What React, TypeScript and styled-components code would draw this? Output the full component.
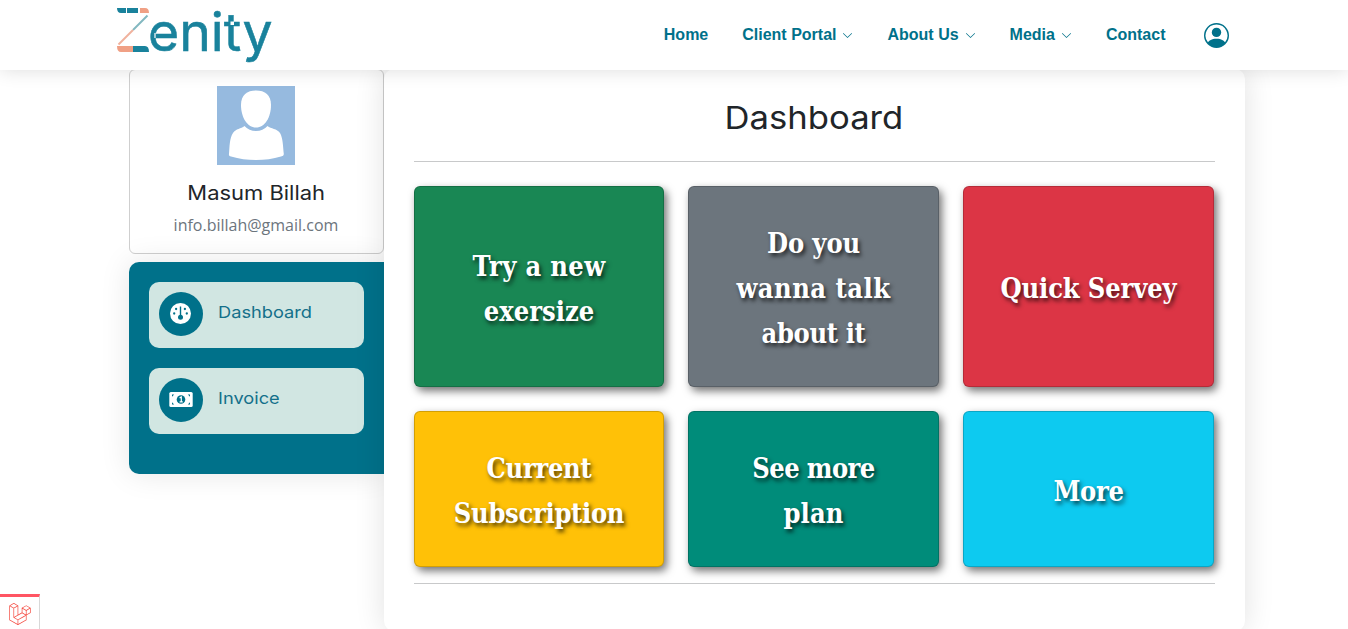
import React from 'react';
import styled, { createGlobalStyle } from 'styled-components';
import { BsChevronDown, BsPersonCircle } from 'react-icons/bs';
import { FaLaravel } from 'react-icons/fa6';

const teal = '#00718a';

const GlobalStyle = createGlobalStyle`
  *, *::before, *::after { box-sizing: border-box; }
  html, body { margin: 0; height: 100%; overflow: hidden; background: #fff; }
  body { font-family: "Open Sans", sans-serif; color: #212529; }
`;

const Page = styled.div`
  height: 629px;
  overflow: hidden;
  display: flex;
  flex-direction: column;
`;

const Header = styled.header`
  position: relative;
  z-index: 10;
  flex: none;
  height: 70px;
  padding: 0 119px 0 116px;
  display: flex;
  justify-content: space-between;
  align-items: flex-start;
  background: #fff;
  box-shadow: 0 0 18px rgba(0, 0, 0, 0.14);
`;

const LogoSvg = styled.svg`
  display: block;
`;

const Nav = styled.nav`
  height: 70px;
  display: flex;
  align-items: center;
`;

const NavLink = styled.a<{ $gap: number }>`
  display: flex;
  align-items: center;
  gap: 6px;
  margin-right: ${(p) => p.$gap}px;
  color: ${teal};
  font: 700 16px/20px "Liberation Sans", Arial, sans-serif;
  white-space: nowrap;
  svg { width: 11px; height: 11px; }
`;

const AccountIcon = styled(BsPersonCircle)`
  width: 25px;
  height: 25px;
  color: ${teal};
`;

const Content = styled.main`
  flex: none;
  width: 1116px;
  margin: -1px 0 0 129px;
  display: flex;
  align-items: flex-start;
`;

const Sidebar = styled.aside`
  width: 255px;
  flex: none;
  display: flex;
  flex-direction: column;
  gap: 8px;
`;

const ProfileCard = styled.section`
  height: 185px;
  padding: 16px 1px 0 0;
  border: 1px solid #cfcfcf;
  border-radius: 6px;
  background: #fff;
  display: flex;
  flex-direction: column;
  align-items: center;
`;

const AvatarSvg = styled.svg`
  display: block;
  flex: none;
`;

const Name = styled.h2`
  margin: 16px 0 0;
  font: 400 19.5px/24px Inter, sans-serif;
  transform: scaleX(1.125);
  color: #212529;
`;

const Email = styled.p`
  margin: 8px 0 0;
  font-size: 16px;
  line-height: 24px;
  color: #6c757d;
`;

const Menu = styled.nav`
  height: 212px;
  padding: 20px;
  border-radius: 10px 0 0 10px;
  background: ${teal};
  box-shadow: 0 0 30px rgba(0, 0, 0, 0.1);
  display: flex;
  flex-direction: column;
  gap: 20px;
`;

const MenuItem = styled.a`
  height: 66px;
  padding: 10px;
  border-radius: 10px;
  background: #d1e6e2;
  display: flex;
  gap: 15px;
`;

const MenuIcon = styled.span`
  width: 44px;
  height: 44px;
  padding: 0 1px 1px 0;
  border-radius: 50%;
  background: ${teal};
  color: #fff;
  display: flex;
  align-items: center;
  justify-content: center;
`;

const MenuLabel = styled.span`
  font: 400 16.5px/40px Inter, sans-serif;
  transform: scaleX(1.105);
  transform-origin: left;
  color: #14708a;
`;

const Panel = styled.section`
  position: relative;
  flex: 1;
  height: 562px;
  padding: 30px 30px 0;
  border-radius: 10px;
  background: #fff;
  box-shadow: 0 0 30px rgba(0, 0, 0, 0.12);
`;

const Title = styled.h1`
  margin: 0;
  padding: 0 1px 24px 0;
  text-align: center;
  font: 400 31.5px/38px Inter, sans-serif;
  transform: scaleX(1.1);
  color: #212529;
`;

const Rule = styled.hr`
  margin: 0;
  border: 0;
  height: 1px;
  background: #c8c9ca;
`;

const Tiles = styled.div`
  display: grid;
  grid-template-columns: 250px 251px 251px;
  grid-template-rows: 201px 156px;
  gap: 24px;
  padding: 24px 0 16px;
`;

const Tile = styled.a<{ $color: string }>`
  padding-top: 4px;
  display: flex;
  flex-direction: column;
  align-items: center;
  justify-content: center;
  border: 1px solid rgba(0, 0, 0, 0.175);
  border-radius: 6px;
  background: ${(p) => p.$color};
  box-shadow: 3px 4px 8px rgba(0, 0, 0, 0.55);
`;

const TileLine = styled.span<{ $spacing: number }>`
  font: 700 27px/45px "DejaVu Serif Condensed", "DejaVu Serif", serif;
  font-stretch: condensed;
  letter-spacing: ${(p) => p.$spacing}px;
  color: #fff;
  text-shadow: 2px 3px 4px rgba(0, 0, 0, 0.7);
  white-space: nowrap;
`;

const DebugTab = styled.button`
  position: fixed;
  left: 0;
  bottom: 0;
  z-index: 20;
  width: 40px;
  height: 35px;
  padding: 1px 0 0;
  border: 0;
  border-top: 3px solid #ff5563;
  border-right: 1px solid #d8d8d8;
  background: #fff;
  color: #f4493f;
  font-size: 22px;
  display: flex;
  align-items: center;
  justify-content: center;
`;

const Logo = () => (
  <LogoSvg width="160" height="66" viewBox="0 0 160 66" role="img" aria-label="Zenity">
    <path d="M1 8h9v5H5q-4 0-4-5z" fill="#19829c" />
    <path d="M11 8h11v5H11z" fill="#19829c" />
    <path d="M24 8h5q4 0 4 5h-9z" fill="#f0a085" />
    <path d="M31.500 15.500L17 30" stroke="#82b8c0" strokeWidth="2" />
    <path d="M17 30L2.500 44.500" stroke="#f0b29d" strokeWidth="2" />
    <path d="M1 46h16v6H5q-4 0-4-6z" fill="#f0a085" />
    <path d="M17 46h12q4 0 4 6H17z" fill="#19829c" />
    <text x="32" y="51" textLength="124.500" lengthAdjust="spacingAndGlyphs" fontFamily="Inter, sans-serif" fontSize="53" fill="#19829c" stroke="#19829c" strokeWidth="0.500">enity</text>
    <path d="M39 33v5" stroke="#fff" strokeWidth="1.200" />
    <path d="M114.500 21.500h3.500v3.500h-3.500z" fill="#fff" />
  </LogoSvg>
);

const Avatar = () => (
  <AvatarSvg width="78" height="79" viewBox="0 0 78 79">
    <rect width="78" height="79" fill="#96badf" />
    <path d="M39 4.500C48 4.500 54 9 54 19C54 31 48 41.500 39 41.500C30 41.500 24 31 24 19C24 9 30 4.500 39 4.500z" fill="#fff" />
    <path d="M27.500 40Q32 45 39 45Q46 45 50.500 40C54 43 60 42.500 63 47C66 52 66 61 66.800 68Q67 70 64 70.500Q52 74 39 74Q26 74 14 70.500Q11.500 70 12 68C12.500 61 12.500 52 16 47C19 42.500 24 43 27.500 40z" fill="#fff" />
  </AvatarSvg>
);

const GaugeIcon = () => (
  <svg width="21" height="21" viewBox="0 0 21 21">
    <circle cx="10.500" cy="10.500" r="10.500" fill="currentColor" />
    <g fill={teal}>
      <path d="M9.800 3.500h1.400v9h-1.400z" />
      <circle cx="10.500" cy="14.300" r="2.500" />
      <circle cx="4.200" cy="10.500" r="1.150" />
      <circle cx="16.800" cy="10.500" r="1.150" />
      <circle cx="6.100" cy="6" r="1.150" />
      <circle cx="14.900" cy="6" r="1.150" />
    </g>
  </svg>
);

const MoneyIcon = () => (
  <svg width="24" height="15" viewBox="0 0 24 15">
    <rect x="0.300" width="23.400" height="15" rx="1.600" fill="currentColor" />
    <path d="M3 4.700V2.500h2.200zM21 4.700V2.500h-2.200zM3 10.300v2.200h2.200zM21 10.300v2.200h-2.200z" fill={teal} />
    <circle cx="12" cy="7.500" r="4.300" fill={teal} />
    <path d="M10.600 5.900L12.300 5v4.700M10.600 9.800h3.200" fill="none" stroke="currentColor" strokeWidth="1.200" />
  </svg>
);

const links = [
  { label: 'Home', gap: 34 },
  { label: 'Client Portal', menu: true, gap: 34 },
  { label: 'About Us', menu: true, gap: 34 },
  { label: 'Media', menu: true, gap: 34 },
  { label: 'Contact', gap: 38.5 },
];

const tiles = [
  { color: '#198754', lines: [['Try a new', 0.35], ['exersize', 0]] },
  { color: '#6c757d', lines: [['Do you', -0.1], ['wanna talk', 0.5], ['about it', -0.35]] },
  { color: '#dc3545', lines: [['Quick Servey', -0.15]] },
  { color: '#ffc107', lines: [['Current', -0.3], ['Subscription', -0.3]] },
  { color: '#008c7a', lines: [['See more', -0.6], ['plan', 0.1]] },
  { color: '#0dcaf0', lines: [['More', -0.3]] },
] as { color: string; lines: [string, number][] }[];

export default function App() {
  return (
    <Page>
      <GlobalStyle />
      <Header>
        <Logo />
        <Nav>
          {links.map((l) => (
            <NavLink key={l.label} $gap={l.gap}>
              {l.label}
              {l.menu && <BsChevronDown />}
            </NavLink>
          ))}
          <AccountIcon />
        </Nav>
      </Header>
      <Content>
        <Sidebar>
          <ProfileCard>
            <Avatar />
            <Name>Masum Billah</Name>
            <Email>info.billah@gmail.com</Email>
          </ProfileCard>
          <Menu>
            <MenuItem>
              <MenuIcon><GaugeIcon /></MenuIcon>
              <MenuLabel>Dashboard</MenuLabel>
            </MenuItem>
            <MenuItem>
              <MenuIcon><MoneyIcon /></MenuIcon>
              <MenuLabel>Invoice</MenuLabel>
            </MenuItem>
          </Menu>
        </Sidebar>
        <Panel>
          <Title>Dashboard</Title>
          <Rule />
          <Tiles>
            {tiles.map((t) => (
              <Tile key={t.color} $color={t.color}>
                {t.lines.map(([text, spacing]) => (
                  <TileLine key={text} $spacing={spacing}>{text}</TileLine>
                ))}
              </Tile>
            ))}
          </Tiles>
          <Rule />
        </Panel>
      </Content>
      <DebugTab aria-label="Debug bar"><FaLaravel /></DebugTab>
    </Page>
  );
}
